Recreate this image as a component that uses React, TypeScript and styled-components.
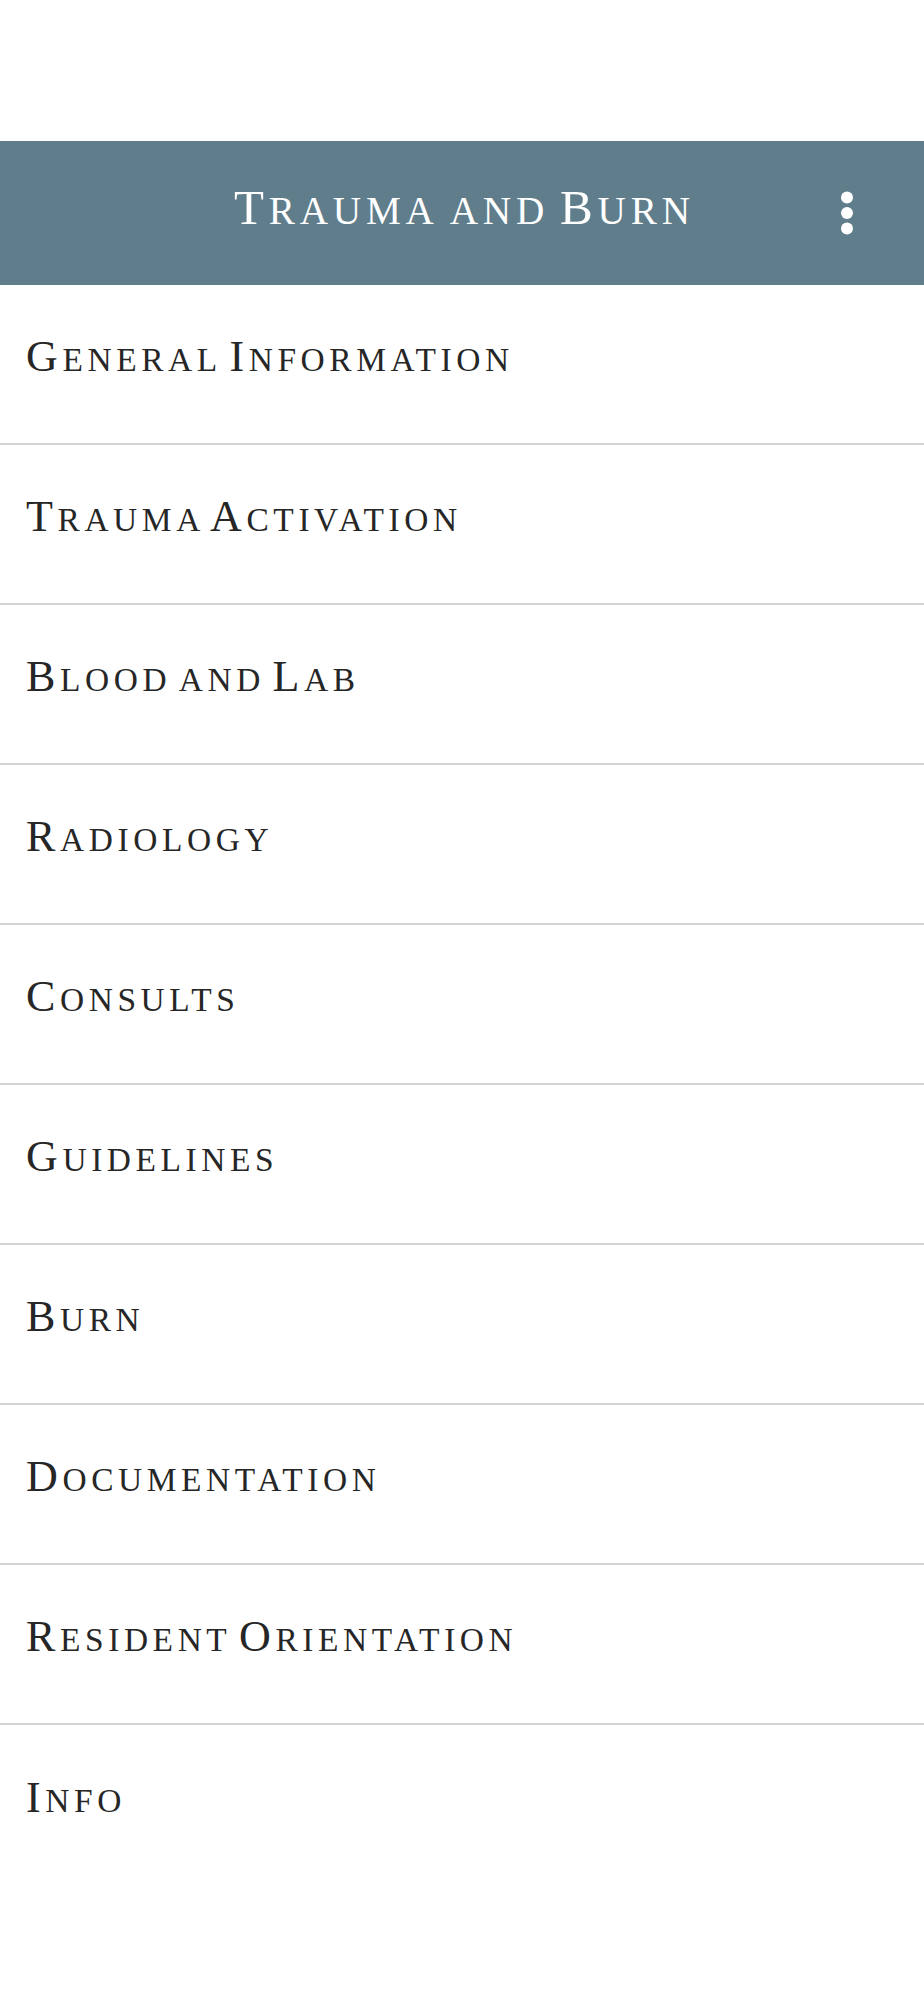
import React from "react";
import styled, { createGlobalStyle } from "styled-components";

const Global = createGlobalStyle`
  html, body {
    margin: 0;
    padding: 0;
    background: #fff;
  }
  body {
    font-family: "Liberation Serif", "DejaVu Serif", serif;
  }
`;

const Page = styled.div`
  width: 924px;
  min-height: 2000px;
  padding-top: 141px;
  box-sizing: border-box;
  background: #fff;
`;

const Toolbar = styled.header`
  height: 144px;
  background: #607d8b;
  display: grid;
  grid-template-columns: 1fr auto 1fr;
  align-items: center;
`;

const Title = styled.h1`
  grid-column: 2;
  margin: 0;
  color: #fff;
  font-size: 49px;
  font-weight: 400;
  letter-spacing: 4.8px;
  word-spacing: -6px;
  line-height: 1;
  margin-right: -4.8px;
  margin-top: -12px;
`;

const MenuButton = styled.button`
  grid-column: 3;
  justify-self: end;
  margin-right: 53px;
  width: 48px;
  height: 48px;
  padding: 0;
  border: 0;
  background: transparent;
  display: flex;
  align-items: center;
  justify-content: center;
`;

const List = styled.nav`
  display: flex;
  flex-direction: column;
`;

const Row = styled.a<{ $last?: boolean }>`
  display: flex;
  align-items: center;
  height: 160px;
  box-sizing: border-box;
  padding-left: 26px;
  padding-bottom: 14px;
  border-bottom: ${(p) => (p.$last ? "0" : "2px solid #d4d4d4")};
  box-shadow: ${(p) => (p.$last ? "none" : "0 1px 1px rgba(0, 0, 0, 0.08)")};
  color: #262626;
  text-decoration: none;
  background: #fff;
`;

const Label = styled.span`
  font-size: 44px;
  letter-spacing: 4.6px;
  word-spacing: -8px;
  line-height: 1;
  white-space: pre;
`;

const Small = styled.span<{ $scale: number }>`
  font-size: ${(p) => p.$scale}em;
  text-transform: uppercase;
`;

// renders lowercase runs as smaller capitals, like a small-caps face
const SmallCaps = ({ text, scale }: { text: string; scale: number }) => {
  const parts = text.match(/[a-z]+|[^a-z]+/g) || [];
  return (
    <>
      {parts.map((part, i) =>
        /[a-z]/.test(part) ? (
          <Small key={i} $scale={scale}>
            {part}
          </Small>
        ) : (
          <React.Fragment key={i}>{part}</React.Fragment>
        )
      )}
    </>
  );
};

const items = [
  "General Information",
  "Trauma Activation",
  "Blood and Lab",
  "Radiology",
  "Consults",
  "Guidelines",
  "Burn",
  "Documentation",
  "Resident Orientation",
  "Info",
];

const MoreIcon = () => (
  <svg width="48" height="48" viewBox="0 0 24 24" fill="#fff">
    <circle cx="12" cy="4.3" r="3" />
    <circle cx="12" cy="12" r="3" />
    <circle cx="12" cy="19.7" r="3" />
  </svg>
);

export default function App() {
  return (
    <>
      <Global />
      <Page>
        <Toolbar>
          <Title>
            <SmallCaps text="Trauma and Burn" scale={0.8} />
          </Title>
          <MenuButton aria-label="More options">
            <MoreIcon />
          </MenuButton>
        </Toolbar>
        <List>
          {items.map((item, i) => (
            <Row key={item} $last={i === items.length - 1}>
              <Label>
                <SmallCaps text={item} scale={0.76} />
              </Label>
            </Row>
          ))}
        </List>
      </Page>
    </>
  );
}
